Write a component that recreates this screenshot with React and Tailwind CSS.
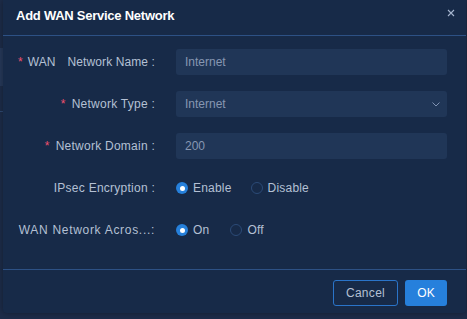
import { useState } from "react";

function Radio({ checked, label, onClick }) {
  return (
    <button type="button" onClick={onClick} className="flex items-center gap-[5px] cursor-pointer">
      {checked ? (
        <span className="flex items-center justify-center w-[12px] h-[12px] rounded-full bg-[#2680db]">
          <span className="w-[5px] h-[5px] rounded-full bg-white" />
        </span>
      ) : (
        <span className="w-[12px] h-[12px] rounded-full border border-[#2b4a77]" />
      )}
      <span className="text-[12px] text-[#b4c0d4] tracking-[0.2px]">{label}</span>
    </button>
  );
}

function Row({ label, children, wide }) {
  return (
    <div className="flex items-center h-[26px] gap-4">
      <div
        className={
          "w-[144px] pr-[5px] text-right text-[12px] text-[#b4c0d4] whitespace-nowrap " +
          (wide ? "tracking-[0.7px]" : "tracking-[0.25px]")
        }
      >
        {label}
      </div>
      <div className="flex-1 flex items-center">{children}</div>
    </div>
  );
}

const Star = () => <span className="text-[#f0506e] mr-[6px]">*</span>;

export default function App() {
  const [ipsec, setIpsec] = useState(true);
  const [across, setAcross] = useState(true);

  return (
    <div
      className="w-[467px] h-[319px] bg-[#1d2c49] flex overflow-hidden"
      style={{ fontFamily: '"Liberation Sans", Arial, sans-serif' }}
    >
      {/* page behind the dialog */}
      <div className="w-[3px] shrink-0 flex flex-col">
        <div className="h-[48px]" />
        <div className="h-[38px] bg-[#26395a]" />
        <div className="h-[25px]" />
        <div className="h-px bg-[#2f4a72]" />
      </div>

      <div className="w-[463px] h-[313px] shrink-0 bg-[#172a48] rounded-b-[4px] shadow-[0_0_6px_rgba(0,0,0,0.35)] flex flex-col">
        {/* header */}
        <div className="h-[36px] shrink-0 pl-[13px] pr-[11px] flex items-center justify-between border-b border-[#2d5185]">
          <span className="text-[13px] font-bold tracking-[-0.25px] text-white -mt-[4px]">Add WAN Service Network</span>
          <svg width="8" height="8" viewBox="0 0 8 8" className="-mt-[9px]">
            <path d="M1 1L7 7M7 1L1 7" stroke="#a6b5cf" strokeWidth="1.1" />
          </svg>
        </div>

        {/* body */}
        <div className="flex-1 pt-[13px] pl-[13px] pr-[19px] flex flex-col gap-4 border-b border-[#2d5185]">
          <div className="flex items-center h-[26px] gap-4">
            <div className="w-[144px] pr-[5px] flex items-center text-[12px] tracking-[0.1px] text-[#b4c0d4] whitespace-nowrap">
              <span className="ml-[2px]"><Star /></span>
              <span className="-ml-[1px]">WAN</span>
              <span className="ml-auto">Network Name&nbsp;:</span>
            </div>
            <input
              defaultValue="Internet"
              className="flex-1 h-[26px] rounded-[3px] bg-[#203657] px-[9px] text-[12px] text-[#8797b2] outline-none"
            />
          </div>

          <Row label={<><Star />Network Type&nbsp;:</>}>
            <div className="flex-1 h-[26px] rounded-[3px] bg-[#203657] pl-[9px] pr-[7px] flex items-center justify-between">
              <span className="text-[12px] text-[#8797b2]">Internet</span>
              <svg width="8" height="5" viewBox="0 0 8 5">
                <path d="M0.5 0.5L4 4L7.5 0.5" fill="none" stroke="#7f92b2" strokeWidth="1" />
              </svg>
            </div>
          </Row>

          <Row label={<><Star />Network Domain&nbsp;:</>}>
            <input
              defaultValue="200"
              className="flex-1 h-[26px] rounded-[3px] bg-[#203657] px-[9px] text-[12px] text-[#8797b2] outline-none"
            />
          </Row>

          <Row label={<>IPsec Encryption&nbsp;:</>}>
            <div className="flex items-center gap-[19px]">
              <Radio checked={ipsec} label="Enable" onClick={() => setIpsec(true)} />
              <Radio checked={!ipsec} label="Disable" onClick={() => setIpsec(false)} />
            </div>
          </Row>

          <Row wide label={<>WAN Network Acros...:</>}>
            <div className="flex items-center gap-[21px]">
              <Radio checked={across} label="On" onClick={() => setAcross(true)} />
              <Radio checked={!across} label="Off" onClick={() => setAcross(false)} />
            </div>
          </Row>
        </div>

        {/* footer */}
        <div className="h-[43px] shrink-0 pt-[10px] pr-[19px] flex justify-end gap-[7px]">
          <button className="w-[65px] h-[26px] rounded-[3px] border border-[#2a74c9] text-[12px] tracking-[0.3px] text-[#b4c0d4]">
            Cancel
          </button>
          <button className="w-[42px] h-[26px] rounded-[3px] bg-[#2680dc] text-[12px] text-white">
            OK
          </button>
        </div>
      </div>
    </div>
  );
}
